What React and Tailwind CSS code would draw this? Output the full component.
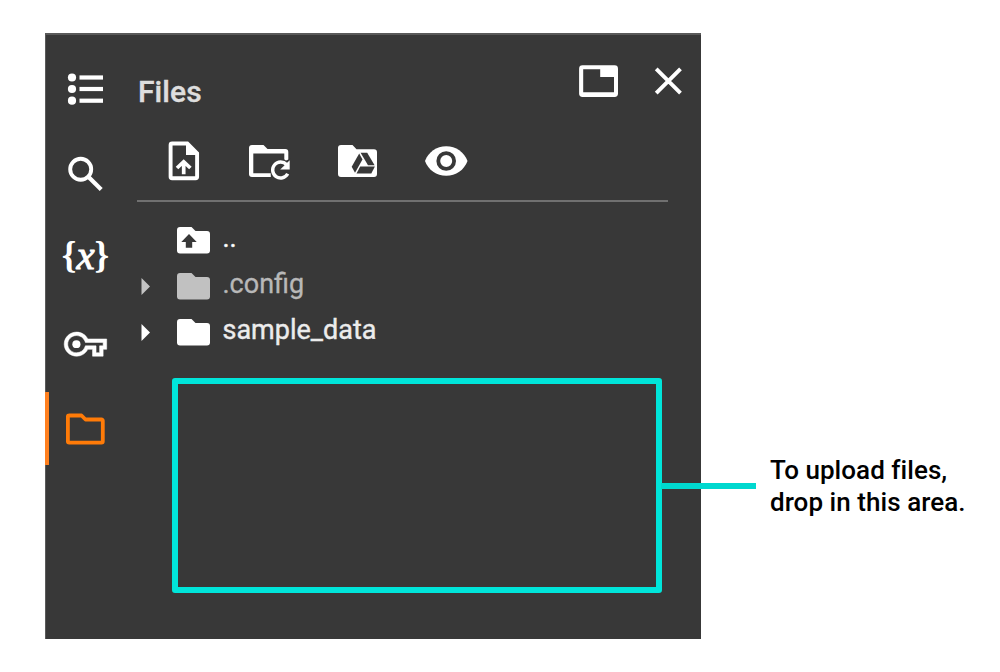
import React from "react";

const FOLDER = "M3 0h11.500l4 4H30a3 3 0 0 1 3 3v16.500a3 3 0 0 1-3 3H3a3 3 0 0 1-3-3V3a3 3 0 0 1 3-3z";

function ListIcon() {
  return (
    <svg className="h-10 w-12" viewBox="62 68.500 48 40" fill="#fff">
      {[77, 88.5, 100.2].map((y) => (
        <g key={y}>
          <circle cx="72" cy={y} r="4.100" />
          <rect x="79.500" y={y - 2.1} width="23.500" height="4.200" />
        </g>
      ))}
    </svg>
  );
}

function SearchIcon() {
  return (
    <svg className="h-10 w-12" viewBox="61.700 153.500 48 40" fill="none" stroke="#fff">
      <circle cx="80.400" cy="168.700" r="10.500" strokeWidth="3.900" />
      <path d="M88 176.300L100.900 189" strokeWidth="4.200" />
    </svg>
  );
}

function KeyIcon() {
  return (
    <svg className="h-10 w-12" viewBox="62 323.500 48 40" fill="#fff">
      <g transform="translate(64.200 323) scale(1.770 1.720)">
        <path stroke="#fff" strokeWidth="0.300" d="M22 19h-6v-4h-2.680c-1.140 2.420-3.600 4-6.320 4-3.860 0-7-3.140-7-7s3.140-7 7-7c2.720 0 5.170 1.580 6.320 4H24v6h-2v4zm-4-2h2v-4h2v-2H11.940l-.23-.67C11.010 8.340 9.110 7 7 7c-2.760 0-5 2.240-5 5s2.240 5 5 5c2.110 0 4.010-1.340 4.710-3.330l.23-.67H18v4z" />
        <circle cx="6.900" cy="12" r="2.300" />
      </g>
    </svg>
  );
}

function FolderOutlineIcon() {
  return (
    <svg className="h-10 w-12" viewBox="62 408.500 48 40" fill="none" stroke="#ff7b08" strokeWidth="3.800" strokeLinejoin="round">
      <path d="M69 415h12.500l4 4H101.500a1.300 1.300 0 0 1 1.300 1.300V440.800a1.300 1.300 0 0 1-1.300 1.300H69.200a1.300 1.300 0 0 1-1.300-1.300V416.300a1.300 1.300 0 0 1 1.300-1.300z" />
    </svg>
  );
}

function VariablesIcon() {
  return (
    <span className="flex items-center justify-center pb-[5px] font-['Liberation_Serif',serif] text-[37px] leading-[40px] font-bold text-white">
      <span>{"{"}</span>
      <span className="pb-[3px] text-[41px] font-normal italic [-webkit-text-stroke:1px_#fff]">x</span>
      <span>{"}"}</span>
    </span>
  );
}

function TabIcon() {
  return (
    <svg className="h-8 w-10" viewBox="578 65 40 32" fill="#fff" fillRule="evenodd">
      <path d="M582.500 65.300h32.100a3.400 3.400 0 0 1 3.400 3.400v24.900a3.400 3.400 0 0 1-3.400 3.400h-32.100a3.400 3.400 0 0 1-3.400-3.400v-24.900a3.400 3.400 0 0 1 3.400-3.400zM583.200 69.300v23h30.800v-15.300H600.200v-7.700z" />
    </svg>
  );
}

function CloseIcon() {
  return (
    <svg className="h-8 w-8" viewBox="652 65 32 32" stroke="#fff" strokeWidth="3.900">
      <path d="M656.200 68.900l24.300 24.300M680.500 68.900l-24.300 24.300" />
    </svg>
  );
}

function UploadIcon() {
  return (
    <svg className="h-12 w-10" viewBox="164 137 40 48" fill="none" stroke="#fff" strokeWidth="3.900">
      <path d="M172.300 143.500h15l9.800 9.800v23.500a1.500 1.500 0 0 1-1.500 1.500h-23.500a1.500 1.500 0 0 1-1.500-1.500v-31.800a1.500 1.500 0 0 1 1.500-1.500z" />
      <path d="M186 142v13h12.500z" fill="#fff" stroke="none" />
      <path d="M183.700 174.200V162M177 168l6.700-6.300 6.700 6.300" strokeWidth="3.700" />
    </svg>
  );
}

function RefreshFolderIcon() {
  return (
    <svg className="h-12 w-12" viewBox="245 137 48 48" fill="#fff">
      <path fillRule="evenodd" d="M252 145h11.500l4 4H285.300a3 3 0 0 1 3 3v25h-36.300a3 3 0 0 1-3-3V148a3 3 0 0 1 3-3zM253.300 153.600v19.600h31v-19.600z" />
      <path d="M270.500 167.500a11 11 0 0 1 13-8.500l2.500 1.500 5-2V182h-20z" fill="#383838" />
      <path d="M286.500 164.500A8 8 0 1 0 287.700 173.800" fill="none" stroke="#fff" strokeWidth="3.400" />
      <path d="M289.700 160.300v9.200h-9.500z" />
    </svg>
  );
}

function DriveFolderIcon() {
  return (
    <svg className="h-12 w-12" viewBox="334 137 48 48" fill="#fff">
      <path d="M341 145h11.500l4 4.300H374a3 3 0 0 1 3 3V174a3 3 0 0 1-3 3H341a3 3 0 0 1-3-3V148a3 3 0 0 1 3-3z" />
      <g fill="#383838">
        <path d="M359.200 153.600L351.700 166.700L355 172.700L362.500 159.500z" />
        <path d="M360.600 152.700H367.200L374.600 165.300H368z" />
        <path d="M360.200 166.600H374.900L371.300 173.500H356.500z" />
      </g>
    </svg>
  );
}

function EyeIcon() {
  return (
    <svg className="h-12 w-12" viewBox="422 137 48 48">
      <path d="M446.200 146.200C436.500 146.200 428.300 152 425 161C428.300 170 436.500 175.800 446.200 175.800S464.200 170 467.500 161C464.200 152 456 146.200 446.200 146.200z" fill="#fff" />
      <circle cx="446.200" cy="161" r="7.900" fill="none" stroke="#383838" strokeWidth="3.800" />
    </svg>
  );
}

function Caret({ className }) {
  return (
    <svg className={`h-[17px] w-[9px] ${className}`} viewBox="0 0 9 17" fill="currentColor">
      <path d="M0.500 0L9 8.500L0.500 17z" />
    </svg>
  );
}

function Folder({ className, up }) {
  return (
    <svg className={`h-[27px] w-[33px] ${className}`} viewBox="0 0 33 27" fill="currentColor">
      <path d={FOLDER} />
      {up && <path d="M12 7L19.700 15H15.200V20.800H8.800V15H4.300z" fill="#383838" />}
    </svg>
  );
}

function RailItem({ active, children }) {
  return (
    <div className="flex h-[85px] items-center">
      <div className={`h-[73px] w-1 ${active ? "bg-[#ff801f]" : ""}`} />
      <div className="flex w-[73px] justify-center">{children}</div>
    </div>
  );
}

export default function App() {
  return (
    <div className="flex h-[672px] w-[1000px] overflow-hidden bg-white pt-[33px] pl-[45px] font-['Roboto',sans-serif]">
      <div className="flex h-[606px] w-[656px] shrink-0 border-t-2 border-l border-[#5a5a5a] bg-[#383838]">
        <nav className="-ml-px w-[81px] shrink-0 pt-[11px]">
          <RailItem><ListIcon /></RailItem>
          <RailItem><SearchIcon /></RailItem>
          <RailItem><VariablesIcon /></RailItem>
          <RailItem><KeyIcon /></RailItem>
          <RailItem active><FolderOutlineIcon /></RailItem>
        </nav>

        <main className="w-[575px] pl-[11px]">
          <header className="flex h-[102px] w-[547px] items-start pt-[30px]">
            <h1 className="mt-[7px] flex-1 pl-px text-[30px] leading-10 font-medium tracking-[0.100px] text-[#dedede] [-webkit-text-stroke:0.400px_#dedede]">Files</h1>
            <div className="flex gap-[34px]">
              <TabIcon />
              <CloseIcon />
            </div>
          </header>
          <div className="flex h-[65px] w-[531px] border-b-2 border-[#707070] pl-[27px]">
            <UploadIcon />
            <div className="flex gap-[41px] pl-[41px]">
              <RefreshFolderIcon />
              <DriveFolderIcon />
            </div>
            <div className="pl-10">
              <EyeIcon />
            </div>
          </div>
          <ul className="h-[176px] pt-[15px] text-[27px]">
            <li className="flex h-[46px] items-center">
              <Folder up className="ml-10 text-white" />
              <span className="ml-[12.500px] -mt-1 text-white [-webkit-text-stroke:0.400px_#fff]">..</span>
            </li>
            <li className="flex h-[46px] items-center text-[#b8b8b8]">
              <Caret className="ml-[4px] text-[#c4c4c4]" />
              <Folder className="ml-[27px] text-[#c1c1c1]" />
              <span className="ml-[12.500px] -mt-1 [-webkit-text-stroke:0.300px_#b8b8b8]">.config</span>
            </li>
            <li className="flex h-[46px] items-center text-[#ececec]">
              <Caret className="ml-[4px] text-white" />
              <Folder className="ml-[27px] text-white" />
              <span className="ml-[12.500px] -mt-1 [-webkit-text-stroke:0.400px_#ececec]">sample_data</span>
            </li>
          </ul>
          <div className="ml-[35px] h-[215px] w-[490px] rounded-[3px] border-6 border-[#00e5da]" />
        </main>
      </div>

      <div className="z-10 mt-[450px] -ml-[40px] h-[6px] w-[95px] shrink-0 bg-[#00d8cf]" />
      <p className="mt-[422px] ml-[14px] text-[26px] leading-[31.500px] font-medium tracking-[0.050px] whitespace-nowrap text-black">
        To upload files,
        <br />
        drop in this area.
      </p>
    </div>
  );
}
